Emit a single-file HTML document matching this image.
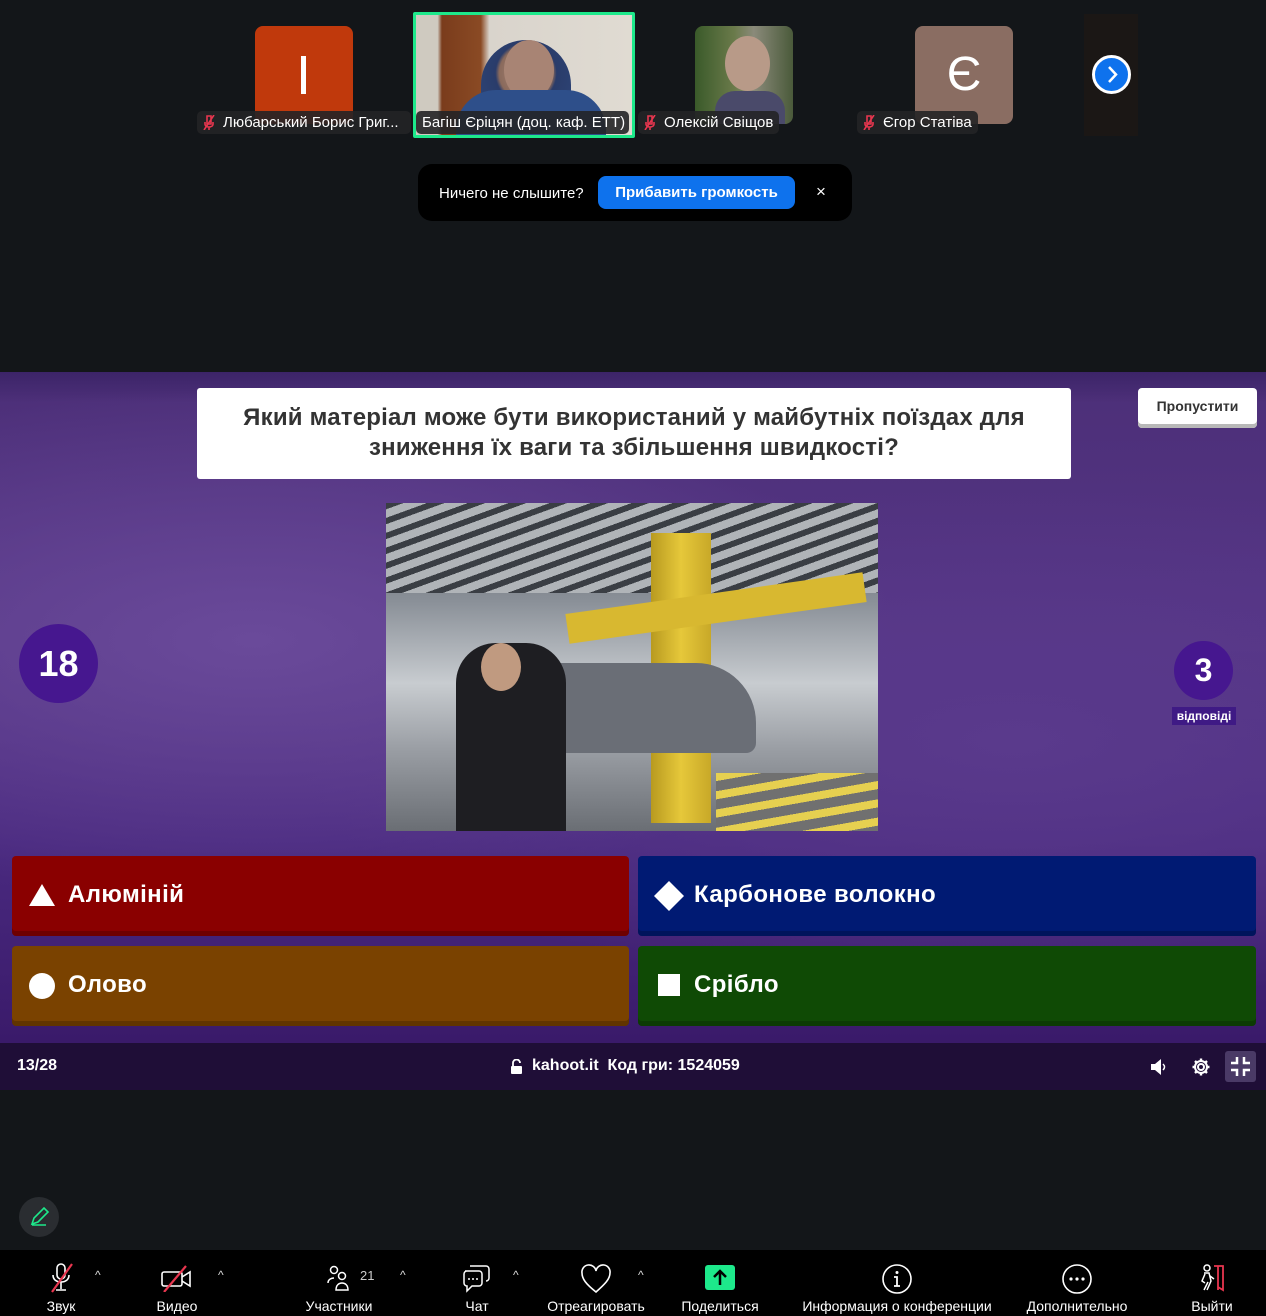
<!DOCTYPE html>
<html><head><meta charset="utf-8"><style>
*{margin:0;padding:0;box-sizing:border-box}
body{width:1266px;height:1316px;background:#131619;position:relative;overflow:hidden;font-family:"Liberation Sans","Noto Sans CJK SC",sans-serif;color:#fff}
.a{position:absolute}
.tile{position:absolute;border-radius:8px;overflow:hidden}
.lbl{position:absolute;top:111px;height:23px;background:rgba(35,35,38,.9);border-radius:5px;font-size:15px;line-height:23px;padding:0 6px 0 26px;white-space:nowrap;color:#fff}
.mic{position:absolute;left:6px;top:4px;width:12px;height:15px}
.ans{position:absolute;height:80px;border-radius:4px;font-weight:bold;font-size:24px;line-height:78px;padding-left:56px;box-shadow:inset 0 -5px 0 rgba(0,0,0,.2);letter-spacing:0.4px}
.tb{position:absolute;top:1298px;font-size:14px;color:#fff;transform:translateX(-50%);white-space:nowrap}
.car{position:absolute;top:1268px;font-size:12px;color:#ddd}
</style></head><body>
<!-- tiles -->
<div class="tile" style="left:255px;top:26px;width:98px;height:98px;background:#c0390c"><div class="a" style="left:46px;top:30px;width:5px;height:38px;background:#fff"></div></div>
<div class="tile" style="left:413px;top:12px;width:222px;height:126px;border:3px solid #1de98b;border-radius:2px;background:linear-gradient(90deg,#cfcac0 0,#cfcac0 10%,#7a3c1c 12%,#8a4a24 30%,#d9d4cc 34%,#e0dbd2 100%)">
 <div class="a" style="left:65px;top:25px;width:90px;height:95px;border-radius:45px 45px 10px 10px;background:radial-gradient(circle at 50% 35%,#b08c7a 0,#8a6a5c 35%,#2a3c6a 40%,#2f4a80 100%)"></div>
 <div class="a" style="left:88px;top:25px;width:50px;height:60px;border-radius:50%;background:#a88474"></div>
 <div class="a" style="left:40px;top:75px;width:150px;height:50px;border-radius:40px 40px 0 0;background:#2e4f8a"></div>
</div>
<div class="tile" style="left:695px;top:26px;width:98px;height:98px;background:linear-gradient(90deg,#3a5a2a,#6a7a4a 40%,#8a8a7a 60%,#4a5a3a)"><div class="a" style="left:30px;top:10px;width:45px;height:55px;border-radius:50%;background:#b89a88"></div><div class="a" style="left:20px;top:65px;width:70px;height:40px;border-radius:20px 20px 0 0;background:#4a4a6a"></div></div>
<div class="tile" style="left:915px;top:26px;width:98px;height:98px;background:#8a6d62;font-size:48px;text-align:center;line-height:98px">Є</div>
<div class="a" style="left:1084px;top:14px;width:54px;height:122px;background:#1b1715"></div>
<div class="a" style="left:1092px;top:55px;width:39px;height:39px;border-radius:50%;background:#0e72ed;border:3px solid #fff"><svg width="33" height="33" viewBox="0 0 33 33" style="position:absolute;left:0;top:0"><path d="M14 9l7 7.5-7 7.5" stroke="#fff" stroke-width="2.5" fill="none"/></svg></div>
<div class="lbl" style="left:197px;width:214px"><svg class="mic" viewBox="0 0 12 15"><path d="M4 1h4v8H4zM2 7v2c0 2 2 3 4 3s4-1 4-3V7M6 12v3M1 15L11 0" stroke="#e8364f" stroke-width="1.6" fill="none"/></svg>Любарський Борис Григ...</div>
<div class="lbl" style="left:416px;padding-left:6px;width:213px">Багіш Єріцян (доц. каф. ЕТТ)</div>
<div class="lbl" style="left:638px"><svg class="mic" viewBox="0 0 12 15"><path d="M4 1h4v8H4zM2 7v2c0 2 2 3 4 3s4-1 4-3V7M6 12v3M1 15L11 0" stroke="#e8364f" stroke-width="1.6" fill="none"/></svg>Олексій Свіщов</div>
<div class="lbl" style="left:857px"><svg class="mic" viewBox="0 0 12 15"><path d="M4 1h4v8H4zM2 7v2c0 2 2 3 4 3s4-1 4-3V7M6 12v3M1 15L11 0" stroke="#e8364f" stroke-width="1.6" fill="none"/></svg>Єгор Статіва</div>
<!-- toast -->
<div class="a" style="left:418px;top:164px;width:434px;height:57px;background:#000;border-radius:14px"></div>
<div class="a" style="left:439px;top:185px;font-size:15px">Ничего не слышите?</div>
<div class="a" style="left:598px;top:176px;width:197px;height:33px;background:#0e72ed;border-radius:8px;font-size:15px;font-weight:bold;text-align:center;line-height:33px">Прибавить громкость</div>
<div class="a" style="left:816px;top:182px;font-size:17px">×</div>
<!-- kahoot -->
<div class="a" style="left:0;top:372px;width:1266px;height:671px;background:radial-gradient(ellipse at 20% 40%,#6a4a9a 0,transparent 45%),radial-gradient(ellipse at 80% 55%,#5a3a8c 0,transparent 50%),linear-gradient(180deg,#4c2f78 0,#553585 40%,#4a2a80 70%,#3a1a6a 100%)"></div>
<div class="a" style="left:0;top:372px;width:1266px;height:30px;background:linear-gradient(#3c2468,transparent)"></div>
<div class="a" style="left:0;top:1043px;width:1266px;height:47px;background:#1f0e37"></div>
<div class="a" style="left:197px;top:388px;width:874px;height:91px;background:#fff;border-radius:3px;color:#333;font-weight:bold;font-size:24px;text-align:center;line-height:30px;padding-top:15px;letter-spacing:0.2px">Який матеріал може бути використаний у майбутніх поїздах для<br>зниження їх ваги та збільшення швидкості?</div>
<div class="a" style="left:1138px;top:388px;width:119px;height:40px;background:#fff;border-radius:4px;box-shadow:0 -4px 0 #b8b8b8 inset;color:#333;font-weight:bold;font-size:14px;text-align:center;line-height:36px">Пропустити</div>
<!-- image -->
<div class="a" style="left:386px;top:503px;width:492px;height:328px;overflow:hidden;background:linear-gradient(180deg,#5a5e64 0,#8a9098 30%,#c8ccd0 55%,#9a9ea4 75%,#6a6e74 100%)">
 <div class="a" style="left:0;top:0;width:492px;height:90px;background:repeating-linear-gradient(160deg,#3a3e44 0,#3a3e44 6px,#b0b4b8 6px,#b0b4b8 14px)"></div>
 <div class="a" style="left:265px;top:30px;width:60px;height:290px;background:linear-gradient(90deg,#b89a20,#e6c83a,#c8a828)"></div>
 <div class="a" style="left:180px;top:90px;width:300px;height:30px;background:#d8b830;transform:rotate(-8deg)"></div>
 <div class="a" style="left:130px;top:160px;width:240px;height:90px;border-radius:40px 60px 10px 10px;background:#6a6e76"></div>
 <div class="a" style="left:70px;top:140px;width:110px;height:188px;border-radius:40px 40px 0 0;background:#1e1e22"></div>
 <div class="a" style="left:95px;top:140px;width:40px;height:48px;border-radius:50%;background:#c09a80"></div>
 <div class="a" style="left:330px;top:270px;width:162px;height:58px;background:repeating-linear-gradient(170deg,#e6d050 0,#e6d050 8px,#707070 8px,#707070 18px)"></div>
</div>
<!-- timer -->
<div class="a" style="left:19px;top:624px;width:79px;height:79px;border-radius:50%;background:#46178f;font-weight:bold;font-size:36px;text-align:center;line-height:79px">18</div>
<div class="a" style="left:1174px;top:641px;width:59px;height:59px;border-radius:50%;background:#46178f;font-weight:bold;font-size:32px;text-align:center;line-height:59px">3</div>
<div class="a" style="left:1172px;top:707px;width:64px;height:18px;background:#3f1a85;font-weight:bold;font-size:12px;text-align:center;line-height:18px">відповіді</div>
<!-- answers -->
<div class="ans" style="left:12px;top:856px;width:617px;background:#8a0000">Алюміній<svg class="a" style="left:17px;top:28px" width="26" height="22"><path d="M13 0L26 22H0z" fill="#fff"/></svg></div>
<div class="ans" style="left:638px;top:856px;width:618px;background:#001a73">Карбонове волокно<svg class="a" style="left:16px;top:25px" width="30" height="30"><path d="M15 0L30 15 15 30 0 15z" fill="#fff"/></svg></div>
<div class="ans" style="left:12px;top:946px;width:617px;background:#7a4200">Олово<div class="a" style="left:17px;top:27px;width:26px;height:26px;border-radius:50%;background:#fff"></div></div>
<div class="ans" style="left:638px;top:946px;width:618px;background:#0f4a05">Срібло<div class="a" style="left:20px;top:28px;width:22px;height:22px;background:#fff"></div></div>
<!-- kahoot bar -->
<div class="a" style="left:17px;top:1057px;font-weight:bold;font-size:16px">13/28</div>
<svg class="a" style="left:511px;top:1059px" width="11" height="15"><path d="M2 7V4a3.5 3.5 0 017 0" stroke="#fff" stroke-width="1.8" fill="none"/><rect x="0" y="7" width="11" height="8" rx="1" fill="#fff"/></svg>
<div class="a" style="left:532px;top:1057px;font-weight:bold;font-size:16px">kahoot.it&nbsp; Код гри: 1524059</div>
<svg class="a" style="left:1150px;top:1058px" width="18" height="18"><path d="M1 6h4l6-5v16l-6-5H1z" fill="#fff"/><path d="M13 6c2 2 2 4 0 6" stroke="#fff" stroke-width="1.5" fill="none"/></svg>
<svg class="a" style="left:1191px;top:1057px" width="20" height="20" viewBox="0 0 20 20"><circle cx="10" cy="10" r="3" stroke="#fff" stroke-width="2" fill="none"/><path d="M10 1.5v3M10 15.5v3M1.5 10h3M15.5 10h3M4 4l2 2M14 14l2 2M4 16l2-2M14 6l2-2" stroke="#fff" stroke-width="2.4"/><circle cx="10" cy="10" r="6" stroke="#fff" stroke-width="2" fill="none"/></svg>
<div class="a" style="left:1225px;top:1051px;width:31px;height:31px;background:#4a3a66;border-radius:3px"><svg width="31" height="31"><path d="M12 6v6H6M19 6v6h6M12 25v-6H6M19 25v-6h6" stroke="#fff" stroke-width="2.5" fill="none"/></svg></div>
<!-- pencil -->
<div class="a" style="left:19px;top:1197px;width:40px;height:40px;border-radius:50%;background:#2a2d31"><svg width="40" height="40"><path d="M13 27l2-6 10-10 4 4-10 10zM13 28h14" stroke="#1de98b" stroke-width="1.6" fill="none"/></svg></div>
<!-- toolbar -->
<div class="a" style="left:0;top:1250px;width:1266px;height:66px;background:#000"></div>
<svg class="a" style="left:48px;top:1262px" width="26" height="32"><rect x="9" y="2" width="8" height="15" rx="4" stroke="#fff" stroke-width="1.6" fill="none"/><path d="M5 13c0 5 4 7 8 7s8-2 8-7M13 20v7M8 28h10" stroke="#fff" stroke-width="1.6" fill="none"/><path d="M4 30L24 2" stroke="#e8364f" stroke-width="2.2"/></svg>
<svg class="a" style="left:160px;top:1264px" width="34" height="28"><rect x="2" y="8" width="20" height="14" rx="2" stroke="#fff" stroke-width="1.6" fill="none"/><path d="M22 13l8-5v14l-8-5" stroke="#fff" stroke-width="1.6" fill="none"/><path d="M4 28L26 2" stroke="#e8364f" stroke-width="2.2"/></svg>
<svg class="a" style="left:327px;top:1264px" width="24" height="28"><circle cx="7" cy="6" r="3.5" stroke="#fff" stroke-width="1.5" fill="none"/><circle cx="15" cy="12" r="3.5" stroke="#fff" stroke-width="1.5" fill="none"/><path d="M1 19c0-4 4-5 6-5M9 26c0-5 3-7 6-7s6 2 6 7z" stroke="#fff" stroke-width="1.5" fill="none"/></svg>
<div class="a" style="left:360px;top:1268px;font-size:13px;color:#ccc">21</div>
<svg class="a" style="left:461px;top:1263px" width="30" height="30"><path d="M9 3h16a3 3 0 013 3v9a3 3 0 01-3 3M4 8h14a3 3 0 013 3v9a3 3 0 01-3 3h-7l-5 5v-5a3 3 0 01-3-3v-9a3 3 0 013-3" stroke="#fff" stroke-width="1.5" fill="none"/><circle cx="8" cy="16" r="1" fill="#fff"/><circle cx="12" cy="16" r="1" fill="#fff"/><circle cx="16" cy="16" r="1" fill="#fff"/></svg>
<svg class="a" style="left:580px;top:1264px" width="32" height="30"><path d="M16 28C6 20 2 15 2 9a7 7 0 0114-2 7 7 0 0114 2c0 6-5 11-14 19z" stroke="#fff" stroke-width="1.6" fill="none"/></svg>
<div class="a" style="left:705px;top:1265px;width:30px;height:25px;background:#1de98b;border-radius:3px"><svg width="30" height="25"><path d="M15 20V7M9 12l6-6 6 6" stroke="#000" stroke-width="2.5" fill="none"/></svg></div>
<svg class="a" style="left:881px;top:1263px" width="32" height="32"><circle cx="16" cy="16" r="14" stroke="#fff" stroke-width="1.6" fill="none"/><circle cx="16" cy="9.5" r="1.5" fill="#fff"/><path d="M13 14h3v9M13 23h6" stroke="#fff" stroke-width="1.8" fill="none"/></svg>
<svg class="a" style="left:1061px;top:1263px" width="32" height="32"><circle cx="16" cy="16" r="14" stroke="#fff" stroke-width="1.6" fill="none"/><circle cx="10" cy="16" r="1.6" fill="#fff"/><circle cx="16" cy="16" r="1.6" fill="#fff"/><circle cx="22" cy="16" r="1.6" fill="#fff"/></svg>
<svg class="a" style="left:1196px;top:1262px" width="32" height="32"><path d="M18 4h9v24l-5-3" stroke="#e8364f" stroke-width="1.8" fill="none"/><path d="M22 4v24" stroke="#e8364f" stroke-width="1.8"/><circle cx="11" cy="6" r="3" stroke="#fff" stroke-width="1.5" fill="none"/><path d="M8 11l5 0 2 8-4 9M9 12l-3 7 3 2M12 20l-4 8M14 14l4 3" stroke="#fff" stroke-width="1.5" fill="none"/></svg>
<div class="car" style="left:95px">^</div><div class="car" style="left:218px">^</div><div class="car" style="left:400px">^</div><div class="car" style="left:513px">^</div><div class="car" style="left:638px">^</div>
<div class="tb" style="left:61px">Звук</div>
<div class="tb" style="left:177px">Видео</div>
<div class="tb" style="left:339px">Участники</div>
<div class="tb" style="left:477px">Чат</div>
<div class="tb" style="left:596px">Отреагировать</div>
<div class="tb" style="left:720px">Поделиться</div>
<div class="tb" style="left:897px">Информация о конференции</div>
<div class="tb" style="left:1077px">Дополнительно</div>
<div class="tb" style="left:1212px">Выйти</div>
</body></html>
